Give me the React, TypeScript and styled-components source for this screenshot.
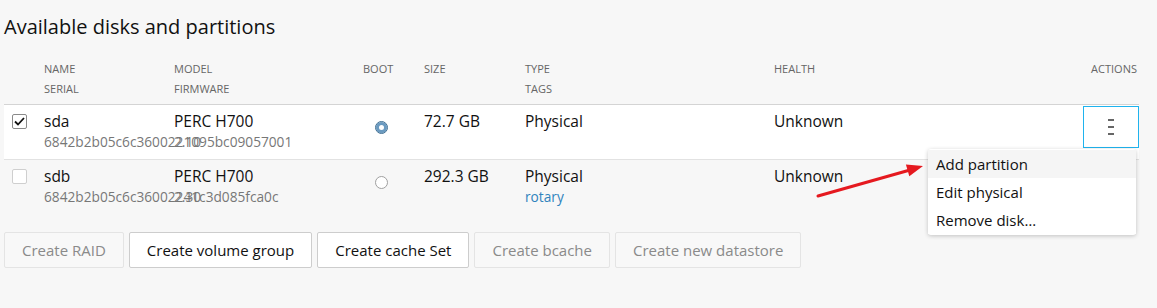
import React from "react";
import styled, { createGlobalStyle } from "styled-components";

const Global = createGlobalStyle`
  html, body { margin: 0; padding: 0; background: #f7f7f7; }
  body { font-family: "Open Sans", "Noto Sans", sans-serif; color: #111; }
  * { box-sizing: border-box; }
`;

const Page = styled.div`
  position: relative;
  width: 1157px;
  height: 308px;
  padding: 13px 18px 0 4px;
  overflow: hidden;
`;

const Title = styled.h1`
  margin: 0 0 18px;
  font-size: 20px;
  line-height: 28px;
  font-weight: 400;
  color: #111;
`;

const COLS = "40px 130px 189px 61px 101px 249px 1fr auto";

const HeaderRow = styled.div`
  display: grid;
  grid-template-columns: ${COLS};
  padding: 0 0 5px;
  border-bottom: 1px solid #d4d4d4;
`;

const HeadCell = styled.div<{ $right?: boolean }>`
  font-size: 11px;
  line-height: 20px;
  color: #666;
  text-transform: uppercase;
  text-align: ${(p) => (p.$right ? "right" : "left")};
  padding-right: ${(p) => (p.$right ? "2px" : "0")};
`;

const Row = styled.div<{ $active?: boolean }>`
  display: grid;
  grid-template-columns: ${COLS};
  padding: 5px 0 7px;
  background: ${(p) => (p.$active ? "#fff" : "transparent")};
  border-bottom: ${(p) => (p.$active ? "1px solid #e2e2e2" : "none")};
`;

const Cell = styled.div`
  min-width: 0;
  white-space: nowrap;
`;

const Primary = styled.div`
  font-size: 15.5px;
  line-height: 22px;
  color: #111;
`;

const Secondary = styled.div<{ $link?: boolean }>`
  font-size: 13.7px;
  line-height: 20px;
  color: ${(p) => (p.$link ? "#2f83bd" : "#777")};
`;

const CheckCell = styled.div`
  padding: 4px 0 0 8px;
`;

const Check = styled.div<{ $on?: boolean }>`
  width: 15px;
  height: 15px;
  border: 1px solid ${(p) => (p.$on ? "#8a8a8a" : "#cfcfcf")};
  border-radius: 2px;
  background: #fff;
  display: flex;
  align-items: center;
  justify-content: center;
`;

const RadioCell = styled.div`
  padding: 11px 0 0 12px;
`;

const Radio = styled.div<{ $on?: boolean }>`
  width: 13px;
  height: 13px;
  border-radius: 50%;
  background: #fff;
  border: 1px solid ${(p) => (p.$on ? "#3f6f93" : "#a0a0a0")};
  box-shadow: ${(p) => (p.$on ? "inset 0 0 0 3px #6a9ac0" : "none")};
`;

const ActionCell = styled.div`
  position: relative;
  margin-top: -4px;
`;

const KebabButton = styled.div`
  width: 56px;
  height: 42px;
  border: 1px solid #1fb3ee;
  background: #fff;
  display: flex;
  align-items: center;
  justify-content: center;
`;

const Menu = styled.div`
  position: absolute;
  top: 43px;
  right: 3px;
  width: 208px;
  padding: 1px 0 1px;
  background: #fff;
  border-radius: 3px;
  box-shadow: 0 1px 4px rgba(0, 0, 0, 0.22);
  z-index: 2;
`;

const MenuItem = styled.div<{ $hover?: boolean }>`
  height: 28px;
  line-height: 28px;
  padding: 0 8px;
  font-size: 15px;
  color: #111;
  background: ${(p) => (p.$hover ? "#f5f5f5" : "#fff")};
`;

const ButtonBar = styled.div`
  display: flex;
  gap: 5px;
  margin-top: 18px;
`;

const Button = styled.button<{ $disabled?: boolean }>`
  height: 36px;
  padding: 0 17px;
  font-family: inherit;
  font-size: 15px;
  border-radius: 2px;
  border: 1px solid ${(p) => (p.$disabled ? "#e4e4e4" : "#cdcdcd")};
  background: ${(p) => (p.$disabled ? "#f8f8f8" : "#fff")};
  color: ${(p) => (p.$disabled ? "#8a8a8a" : "#111")};
`;

const Arrow = styled.svg`
  position: absolute;
  left: 810px;
  top: 155px;
  width: 120px;
  height: 50px;
  z-index: 3;
`;

const Overflow = styled.div`
  overflow: visible;
  white-space: nowrap;
`;

type Disk = {
  name: string;
  serial: string;
  model: string;
  firmware: string;
  boot: boolean;
  size: string;
  type: string;
  tags?: string;
  health: string;
  active?: boolean;
};

const disks: Disk[] = [
  {
    name: "sda",
    serial: "6842b2b05c6c3600221095bc09057001",
    model: "PERC H700",
    firmware: "2.10",
    boot: true,
    size: "72.7 GB",
    type: "Physical",
    health: "Unknown",
    active: true,
  },
  {
    name: "sdb",
    serial: "6842b2b05c6c36002241c3d085fca0c",
    model: "PERC H700",
    firmware: "2.30",
    boot: false,
    size: "292.3 GB",
    type: "Physical",
    tags: "rotary",
    health: "Unknown",
  },
];

const CheckMark = () => (
  <svg width="11" height="9" viewBox="0 0 11 9">
    <polyline points="1,4.5 4,7.5 10,1" fill="none" stroke="#111" strokeWidth="1.8" />
  </svg>
);

const Dots = () => (
  <svg width="6" height="16" viewBox="0 0 6 16">
    <rect x="0" y="0" width="6" height="2" fill="#666" />
    <rect x="0" y="7" width="6" height="2" fill="#666" />
    <rect x="0" y="14" width="6" height="2" fill="#666" />
  </svg>
);

export default function App() {
  return (
    <Page>
      <Global />
      <Title>Available disks and partitions</Title>
      <HeaderRow>
        <HeadCell />
        <HeadCell>Name<br />Serial</HeadCell>
        <HeadCell>Model<br />Firmware</HeadCell>
        <HeadCell>Boot</HeadCell>
        <HeadCell>Size</HeadCell>
        <HeadCell>Type<br />Tags</HeadCell>
        <HeadCell>Health</HeadCell>
        <HeadCell $right>Actions</HeadCell>
      </HeaderRow>
      {disks.map((d) => (
        <Row key={d.name} $active={d.active}>
          <CheckCell>
            <Check $on={d.active}>{d.active && <CheckMark />}</Check>
          </CheckCell>
          <Overflow>
            <Primary>{d.name}</Primary>
            <Secondary>{d.serial}</Secondary>
          </Overflow>
          <Cell>
            <Primary>{d.model}</Primary>
            <Secondary>{d.firmware}</Secondary>
          </Cell>
          <RadioCell>
            <Radio $on={d.boot} />
          </RadioCell>
          <Cell>
            <Primary>{d.size}</Primary>
          </Cell>
          <Cell>
            <Primary>{d.type}</Primary>
            {d.tags && <Secondary $link>{d.tags}</Secondary>}
          </Cell>
          <Cell>
            <Primary>{d.health}</Primary>
          </Cell>
          {d.active ? (
            <ActionCell>
              <KebabButton>
                <Dots />
              </KebabButton>
              <Menu>
                <MenuItem $hover>Add partition</MenuItem>
                <MenuItem>Edit physical</MenuItem>
                <MenuItem>Remove disk…</MenuItem>
              </Menu>
            </ActionCell>
          ) : (
            <Cell />
          )}
        </Row>
      ))}
      <ButtonBar>
        <Button $disabled>Create RAID</Button>
        <Button>Create volume group</Button>
        <Button>Create cache Set</Button>
        <Button $disabled>Create bcache</Button>
        <Button $disabled>Create new datastore</Button>
      </ButtonBar>
      <Arrow viewBox="0 0 120 50">
        <line x1="8" y1="41" x2="100" y2="15" stroke="#e5191f" strokeWidth="3" strokeLinecap="round" />
        <polygon points="113,11 99.3,21.2 95.9,9.6" fill="#e5191f" />
      </Arrow>
    </Page>
  );
}
